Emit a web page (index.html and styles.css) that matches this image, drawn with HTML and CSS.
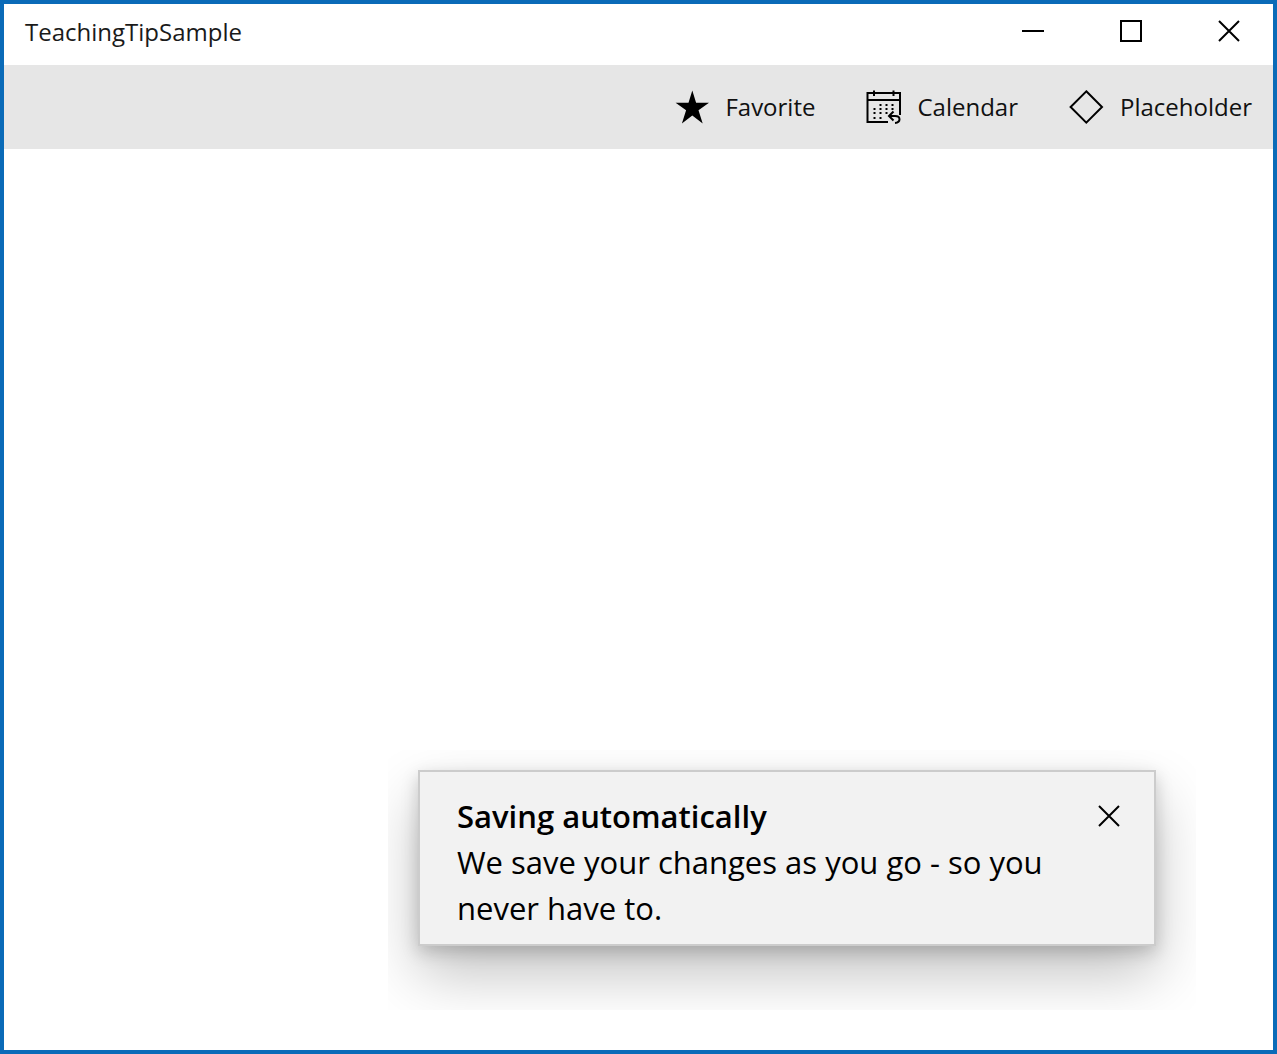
FILE: index.html
```html
<!DOCTYPE html>
<html lang="en">
<head>
  <meta charset="utf-8">
  <meta name="viewport" content="width=device-width, initial-scale=1">
  <title>TeachingTipSample</title>
  <link rel="stylesheet" href="styles.css">
</head>
<body>
  <div class="window">
    <header class="title-bar">
      <h1 class="title-bar__name">TeachingTipSample</h1>
      <div class="title-bar__controls">
        <button class="caption-button" type="button" aria-label="Minimize">
          <svg class="glyph" viewBox="0 0 22 22" aria-hidden="true"><path d="M0 11H22"/></svg>
        </button>
        <button class="caption-button" type="button" aria-label="Maximize">
          <svg class="glyph" viewBox="0 0 22 22" aria-hidden="true"><path d="M1 1H21V21H1Z"/></svg>
        </button>
        <button class="caption-button" type="button" aria-label="Close">
          <svg class="glyph" viewBox="0 0 22 22" aria-hidden="true"><path d="M1 1L21 21M21 1L1 21"/></svg>
        </button>
      </div>
    </header>

    <nav class="command-bar" aria-label="Commands">
      <button class="command" type="button">
        <svg class="command__icon" viewBox="0 0 36 36" aria-hidden="true">
          <path class="solid" d="M19.300 1.500L23.100 13.700H36L25.500 21.200L29.700 34.500L19.300 26.500L8.900 34.500L13.100 21.200L2.600 13.700H15.500Z"/>
        </svg>
        <span>Favorite</span>
      </button>
      <button class="command" type="button">
        <svg class="command__icon" viewBox="0 0 36 36" aria-hidden="true">
          <path d="M23 33H2.500V4H35V26M2.500 11H35M9 1.500V7M28.500 1.500V7"/>
          <path class="dots" d="M14.500 16H29.500M8.500 20H29.500M8.500 24H23M8.500 29H17"/>
          <path d="M28.500 22.500L24 27L28.500 31.500M24 27H30C36 27 36 33.500 30 34"/>
        </svg>
        <span>Calendar</span>
      </button>
      <button class="command" type="button">
        <svg class="command__icon" viewBox="0 0 36 36" aria-hidden="true">
          <path d="M18.300 2.300L34 18L18.300 33.700L2.600 18Z"/>
        </svg>
        <span>Placeholder</span>
      </button>
    </nav>

    <main class="content">
      <div class="tip-area">
        <section class="tip" aria-labelledby="tip-title">
          <div class="tip__text">
            <h2 class="tip__title" id="tip-title">Saving automatically</h2>
            <p class="tip__message">We save your changes as you go - so you never have to.</p>
          </div>
          <button class="tip__close" type="button" aria-label="Close tip">
            <svg class="glyph" viewBox="0 0 22 22" aria-hidden="true"><path d="M1 1L21 21M21 1L1 21"/></svg>
          </button>
        </section>
      </div>
    </main>
  </div>
</body>
</html>
```
FILE: styles.css
```css
* {
  box-sizing: border-box;
}

body {
  margin: 0;
  background: #fff;
  color: #000;
  font-family: "Segoe UI", "Open Sans", "Noto Sans", sans-serif;
}

h1,
h2,
p {
  margin: 0;
}

button {
  display: flex;
  align-items: center;
  padding: 0;
  border: 0;
  background: none;
  color: inherit;
  font: inherit;
}

svg {
  fill: none;
  stroke: currentColor;
  stroke-width: 2;
}

.window {
  display: flex;
  flex-direction: column;
  min-height: 100vh;
  border: 4px solid #0a6bb8;
}

/* Title bar */

.title-bar {
  display: flex;
  justify-content: space-between;
  height: 61px;
  padding-left: 21px;
}

.title-bar__name {
  color: #1a1a1a;
  font-size: 24px;
  font-weight: 400;
  line-height: 55px;
}

.title-bar__controls {
  display: flex;
  gap: 10px;
}

.caption-button {
  justify-content: center;
  width: 88px;
  height: 54px;
}

.glyph {
  width: 22px;
  height: 22px;
}

/* Command bar */

.command-bar {
  display: flex;
  justify-content: flex-end;
  gap: 50px;
  height: 84px;
  padding-right: 21px;
  background: #e6e6e6;
}

.command {
  gap: 16px;
  color: #111;
  font-size: 24px;
  line-height: 32px;
}

.command__icon {
  width: 36px;
  height: 36px;
  color: #000;
}

.command__icon .solid {
  fill: currentColor;
  stroke: none;
}

.command__icon .dots {
  stroke-dasharray: 2 4;
}

/* Content and teaching tip */

.content {
  display: flex;
  flex: 1;
  align-items: flex-end;
  justify-content: flex-end;
  padding: 40px 77px 40px 40px;
}

/* Bounds within which the tip's shadow is drawn */
.tip-area {
  width: 100%;
  max-width: 808px;
  padding: 20px 40px 64px 30px;
  overflow: hidden;
}

.tip {
  display: flex;
  align-items: flex-start;
  justify-content: space-between;
  padding: 21px 34px 13px 37px;
  border: 2px solid #ccc;
  background: #f2f2f2;
  box-shadow: 0 28px 56px rgba(0, 0, 0, 0.24), 0 6px 16px rgba(0, 0, 0, 0.18);
}

.tip__text {
  max-width: 620px;
  font-size: 31px;
  line-height: 46px;
}

.tip__title {
  font-size: 31px;
  font-weight: 600;
}

.tip__close {
  height: 46px;
}
```
